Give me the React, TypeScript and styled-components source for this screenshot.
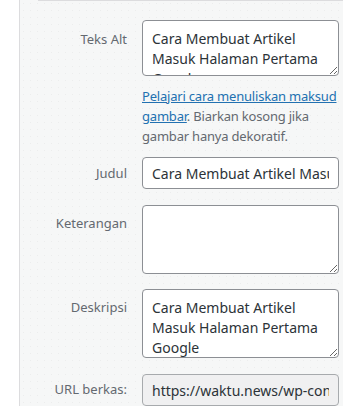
import styled, { createGlobalStyle } from "styled-components";

const GlobalStyle = createGlobalStyle`
	html, body {
		margin: 0;
		padding: 0;
		background: #ffffff;
	}
	body {
		font-family: "Noto Sans", "Open Sans", sans-serif;
	}
`;

const Page = styled.div`
	display: flex;
	flex-direction: row;
	width: 343px;
	height: 406px;
	overflow: hidden;
`;

const Gutter = styled.div`
	width: 19px;
	flex-shrink: 0;
	background: #ffffff;
`;

const Panel = styled.div`
	flex: 1;
	display: flex;
	flex-direction: column;
	border-left: 1px solid #dcdcde;
	background-color: #f6f7f7;
	background-image: radial-gradient(#eceded 0.7px, transparent 0.8px);
	background-size: 7px 7px;
	padding-right: 4px;
`;

const TopRule = styled.div`
	height: 1px;
	margin-left: 18px;
	margin-right: -4px;
	background: #dcdcde;
`;

const Form = styled.div`
	display: flex;
	flex-direction: column;
	padding-top: 19px;
`;

const Row = styled.div<{ spacing?: number }>`
	display: grid;
	grid-template-columns: 107px 1fr;
	column-gap: 15px;
	margin-top: ${({ spacing }) => spacing ?? 0}px;
`;

const Label = styled.label<{ offset?: number }>`
	text-align: right;
	font-size: 13px;
	line-height: 20px;
	color: #646970;
	padding-top: ${({ offset }) => offset ?? 8}px;
	white-space: nowrap;
`;

const Field = styled.div`
	display: flex;
	flex-direction: column;
	min-width: 0;
`;

const TextArea = styled.textarea<{ boxHeight: number }>`
	box-sizing: border-box;
	width: 100%;
	height: ${({ boxHeight }) => boxHeight}px;
	margin: 0;
	padding: 8px 9px;
	border: 1px solid #8c8f94;
	border-radius: 4px;
	background: #ffffff;
	color: #2c3338;
	font-family: "Noto Sans", "Open Sans", sans-serif;
	font-size: 14px;
	line-height: 20px;
	resize: vertical;
	overflow: hidden;
	outline: none;
`;

const TextInput = styled.input<{ readOnlyLook?: boolean }>`
	box-sizing: border-box;
	width: 100%;
	height: 32px;
	margin: 0;
	padding: 0 9px;
	border: 1px solid ${({ readOnlyLook }) => (readOnlyLook ? "#a7aaad" : "#8c8f94")};
	border-radius: 4px;
	background: ${({ readOnlyLook }) => (readOnlyLook ? "#f0f0f1" : "#ffffff")};
	color: #2c3338;
	font-family: "Noto Sans", "Open Sans", sans-serif;
	font-size: 14px;
	line-height: 20px;
	outline: none;
`;

const Help = styled.p`
	margin: 10px 0 0;
	font-size: 13px;
	line-height: 20px;
	letter-spacing: -0.2px;
	color: #646970;
`;

const HelpLink = styled.a`
	color: #2271b1;
	text-decoration: underline;
`;

const title = "Cara Membuat Artikel Masuk Halaman Pertama Google";

export default function App() {
	return (
		<>
			<GlobalStyle />
			<Page>
				<Gutter />
				<Panel>
					<TopRule />
					<Form>
						<Row>
							<Label offset={9}>Teks Alt</Label>
							<Field>
								<TextArea boxHeight={56} defaultValue={title} />
								<Help>
									<HelpLink href="#">Pelajari cara menuliskan maksud gambar</HelpLink>
									. Biarkan kosong jika gambar hanya dekoratif.
								</Help>
							</Field>
						</Row>
						<Row spacing={11}>
							<Label offset={6}>Judul</Label>
							<Field>
								<TextInput type="text" defaultValue={title} />
							</Field>
						</Row>
						<Row spacing={16}>
							<Label offset={8}>Keterangan</Label>
							<Field>
								<TextArea boxHeight={69} defaultValue="" />
							</Field>
						</Row>
						<Row spacing={15}>
							<Label offset={8}>Deskripsi</Label>
							<Field>
								<TextArea boxHeight={69} defaultValue={title} />
							</Field>
						</Row>
						<Row spacing={16}>
							<Label offset={5}>URL berkas:</Label>
							<Field>
								<TextInput
									type="text"
									readOnly
									readOnlyLook
									defaultValue="https://waktu.news/wp-content/uploads/2023/01/cara-membuat-artikel.jpg"
								/>
							</Field>
						</Row>
					</Form>
				</Panel>
			</Page>
		</>
	);
}
